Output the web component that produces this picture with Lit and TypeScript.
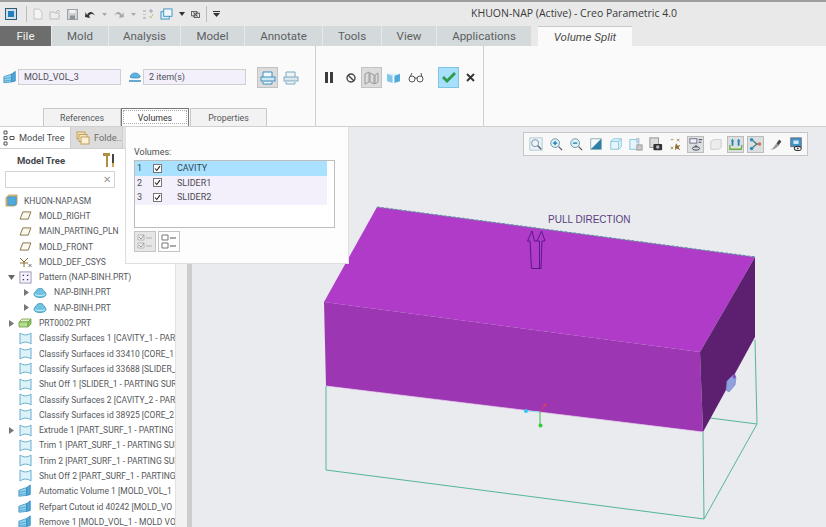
import { LitElement, html, css } from 'lit';
import { customElement } from 'lit/decorators.js';

type Row = { label: string; icon: string; indent: number; arrow?: 'open' | 'closed' };

const ROWS: Row[] = [
  { label: 'KHUON-NAP.ASM', icon: 'asm', indent: 0 },
  { label: 'MOLD_RIGHT', icon: 'plane', indent: 1 },
  { label: 'MAIN_PARTING_PLN', icon: 'plane', indent: 1 },
  { label: 'MOLD_FRONT', icon: 'plane', indent: 1 },
  { label: 'MOLD_DEF_CSYS', icon: 'csys', indent: 1 },
  { label: 'Pattern (NAP-BINH.PRT)', icon: 'pattern', indent: 1, arrow: 'open' },
  { label: 'NAP-BINH.PRT', icon: 'part', indent: 2, arrow: 'closed' },
  { label: 'NAP-BINH.PRT', icon: 'part', indent: 2, arrow: 'closed' },
  { label: 'PRT0002.PRT', icon: 'block', indent: 1, arrow: 'closed' },
  { label: 'Classify Surfaces 1 [CAVITY_1 - PART', icon: 'surf', indent: 1 },
  { label: 'Classify Surfaces id 33410 [CORE_1', icon: 'surf', indent: 1 },
  { label: 'Classify Surfaces id 33688 [SLIDER_1', icon: 'surf', indent: 1 },
  { label: 'Shut Off 1 [SLIDER_1 - PARTING SUR', icon: 'surf', indent: 1 },
  { label: 'Classify Surfaces 2 [CAVITY_2 - PART', icon: 'surf', indent: 1 },
  { label: 'Classify Surfaces id 38925 [CORE_2', icon: 'surf', indent: 1 },
  { label: 'Extrude 1 [PART_SURF_1 - PARTING', icon: 'surf', indent: 1, arrow: 'closed' },
  { label: 'Trim 1 [PART_SURF_1 - PARTING SUR', icon: 'surf', indent: 1 },
  { label: 'Trim 2 [PART_SURF_1 - PARTING SUR', icon: 'surf', indent: 1 },
  { label: 'Shut Off 2 [PART_SURF_1 - PARTING', icon: 'surf', indent: 1 },
  { label: 'Automatic Volume 1 [MOLD_VOL_1', icon: 'vol', indent: 1 },
  { label: 'Refpart Cutout id 40242 [MOLD_VO', icon: 'vol', indent: 1 },
  { label: 'Remove 1 [MOLD_VOL_1 - MOLD VO', icon: 'vol', indent: 1 },
];

const TABS = [
  { label: 'File', w: 52, cls: 'file' },
  { label: 'Mold', w: 57, cls: '' },
  { label: 'Analysis', w: 72, cls: '' },
  { label: 'Model', w: 64, cls: '' },
  { label: 'Annotate', w: 78, cls: '' },
  { label: 'Tools', w: 59, cls: '' },
  { label: 'View', w: 55, cls: '' },
  { label: 'Applications', w: 95, cls: '' },
];

const volIcon = (s = 16) => html`<svg width=${s} height=${s} viewBox="0 0 16 16">
  <path d="M1 7l9-3v9l-9 1z" fill="#8fd0ec" stroke="#3f93c4" stroke-width=".9" />
  <path d="M10 4l4-3v11l-4 1z" fill="#4fa9dc" stroke="#2f84b8" stroke-width=".9" />
  <path d="M1 9.500l9-1.500M1 12l9-1" stroke="#3f93c4" stroke-width=".7" />
</svg>`;

const partIcon = () => html`<svg width="14" height="11" viewBox="0 0 14 11">
  <path d="M1 7.500c0-2 2-3 3-5 2-1.500 5-1.500 6 0 1 2 3 3 3 5 0 2-3 3-6 3s-6-1-6-3z" fill="#6fc3e0" stroke="#3a90b5" stroke-width=".8" />
  <path d="M2 7.500c2 1.500 8 1.500 10 0" fill="none" stroke="#dff3fb" stroke-width=".8" />
</svg>`;

const treeIcon = (kind: string) => {
  switch (kind) {
    case 'asm':
      return html`<svg width="13" height="13" viewBox="0 0 14 14">
        <path d="M1 4l3-3h9v9l-3 3H1z" fill="#e6c47a" stroke="#b08d45" stroke-width=".7" />
        <rect x="3" y="3" width="9" height="9" fill="#4fa9dc" stroke="#2f84b8" stroke-width=".6" />
      </svg>`;
    case 'plane':
      return html`<svg width="13" height="9" viewBox="0 0 14 10">
        <path d="M4 1h9l-3 8H1z" fill="#fbf8ee" stroke="#7d6b3c" stroke-width="1" />
      </svg>`;
    case 'csys':
      return html`<svg width="14" height="12" viewBox="0 0 14 12">
        <path d="M6 6L2 2M6 6l4-4M6 6v5M2 7h8" stroke="#8a6d2f" stroke-width="1" fill="none" />
        <path d="M10.500 8l3 3m0-3l-3 3" stroke="#444" stroke-width=".7" />
      </svg>`;
    case 'pattern':
      return html`<svg width="13" height="13" viewBox="0 0 14 14">
        <rect x="1" y="1" width="12" height="12" fill="#f5f2fb" stroke="#9a93b8" />
        <path d="M4 4h1.500v1.500H4zM8.500 4H10v1.500H8.500zM4 8.500h1.500V10H4zM8.500 8.500H10V10H8.500z" fill="#3b3470" />
      </svg>`;
    case 'part':
      return partIcon();
    case 'block':
      return html`<svg width="14" height="10" viewBox="0 0 14 10">
        <path d="M1 4l3-3h9l-3 3z" fill="#e2f4c8" stroke="#6f9a4a" stroke-width=".8" />
        <path d="M1 4h9v5H1z" fill="#b3e08a" stroke="#6f9a4a" stroke-width=".8" />
        <path d="M10 4l3-3v5l-3 3z" fill="#8fc560" stroke="#6f9a4a" stroke-width=".8" />
      </svg>`;
    case 'surf':
      return html`<svg width="13" height="13" viewBox="0 0 13 13">
        <path d="M1 1c3.500 2.500 7.500 2.500 11 0v11c-3.500-2.500-7.500-2.500-11 0z" fill="#dcf1fa" stroke="#66aecb" stroke-width="1" />
      </svg>`;
    default:
      return volIcon(14);
  }
};

const checkMark = html`<svg width="9" height="9" viewBox="0 0 9 9">
  <rect x=".5" y=".5" width="8" height="8" fill="#fff" stroke="#777" />
  <path d="M2 4.500l1.800 2L7 2.200" fill="none" stroke="#222" stroke-width="1.100" />
</svg>`;

const qat = [
  html`<svg width="10" height="12" viewBox="0 0 10 12"><path d="M1 1h5l3 3v7H1z" fill="#f4f4f4" stroke="#c4c4c4" /></svg>`,
  html`<svg width="12" height="11" viewBox="0 0 12 11"><path d="M1 3h4l1 1h4v6H1z" fill="#ececec" stroke="#bdbdbd" /><path d="M7 3l2-2 2 2" fill="none" stroke="#bdbdbd" /></svg>`,
  html`<svg width="11" height="11" viewBox="0 0 11 11"><rect x=".5" y=".5" width="10" height="10" fill="#cfd2d6" stroke="#9fa3a8" /><rect x="2.500" y="1" width="6" height="3" fill="#f2f2f2" /><rect x="3" y="6.500" width="5" height="4" fill="#8e9297" /></svg>`,
  html`<svg width="12" height="9" viewBox="0 0 12 9"><path d="M3 5c2-4 6-4 8 1-2-2.500-4-2.500-6-.5l1 2.500L1 7l.5-5z" fill="#333" /></svg>`,
  html`<svg width="5" height="3" viewBox="0 0 5 3"><path d="M0 0h5L2.500 3z" fill="#a8a8a8" /></svg>`,
  html`<svg width="12" height="9" viewBox="0 0 12 9"><path d="M9 5C7 1 3 1 1 6c2-2.500 4-2.500 6-.5L6 8l5-1-.5-5z" fill="#a5a9ad" /></svg>`,
  html`<svg width="5" height="3" viewBox="0 0 5 3"><path d="M0 0h5L2.500 3z" fill="#a8a8a8" /></svg>`,
  html`<svg width="12" height="13" viewBox="0 0 12 13"><path d="M1 2h3v2H1zM1 6h3v1H1zM1 9h3v2H1z" fill="#c4c4c4" /><path d="M7 3h4M9 1v4" stroke="#9aa" /><path d="M7 8l2 2 2-4" stroke="#c9b98a" fill="none" /></svg>`,
  html`<svg width="13" height="12" viewBox="0 0 14 13"><rect x="1" y="4" width="9" height="8" fill="#d6ecf8" stroke="#3f8fc0" /><rect x="4" y="1" width="9" height="8" fill="#eef7fc" stroke="#3f8fc0" /></svg>`,
  html`<svg width="6" height="4" viewBox="0 0 6 4"><path d="M0 0h6L3 4z" fill="#333" /></svg>`,
  html`<svg width="9" height="7" viewBox="0 0 10 8"><rect x=".5" y=".5" width="6" height="5" fill="none" stroke="#555" /><rect x="3.500" y="2.500" width="6" height="5" fill="none" stroke="#555" /><path d="M2 1l6 6M8 1L2 7" stroke="#555" stroke-width=".7" /></svg>`,
];

const viewIcons = [
  html`<svg viewBox="0 0 16 16"><rect x="1" y="1" width="14" height="14" fill="#eaf4f8" stroke="#a8c4d0" /><circle cx="7" cy="7" r="4" fill="none" stroke="#789" /><path d="M10 10l4 4" stroke="#556" stroke-width="1.500" /></svg>`,
  html`<svg viewBox="0 0 16 16"><circle cx="7" cy="7" r="5" fill="#dff1f7" stroke="#5f8e9e" /><path d="M4.500 7h5M7 4.500v5" stroke="#1d7fb0" stroke-width="1.500" /><path d="M11 11l4 4" stroke="#556" stroke-width="1.500" /></svg>`,
  html`<svg viewBox="0 0 16 16"><circle cx="7" cy="7" r="5" fill="#dff1f7" stroke="#5f8e9e" /><path d="M4.500 7h5" stroke="#1d7fb0" stroke-width="1.500" /><path d="M11 11l4 4" stroke="#556" stroke-width="1.500" /></svg>`,
  html`<svg viewBox="0 0 16 16"><rect x="2" y="2" width="12" height="12" fill="#f4f8fa" stroke="#8aa" /><path d="M2 14L14 2v12z" fill="#2b7fa8" /></svg>`,
  html`<svg viewBox="0 0 16 16"><path d="M2 5l3-3h9v9l-3 3H2z" fill="#e6f5fb" stroke="#7cc0dc" /><path d="M11 5v9M11 5l3-3M2 5h9" stroke="#7cc0dc" fill="none" /></svg>`,
  html`<svg viewBox="0 0 16 16"><rect x="1" y="3" width="10" height="11" fill="#e6f5fb" stroke="#7cc0dc" /><rect x="8" y="1" width="4" height="6" fill="#bcd" /><rect x="9" y="9" width="6" height="6" fill="#c8c8c8" stroke="#999" /></svg>`,
  html`<svg viewBox="0 0 16 16"><rect x="1" y="1" width="10" height="11" fill="#dcdcdc" stroke="#8a8a8a" /><rect x="5" y="8" width="10" height="7" rx="1" fill="#333" /><circle cx="10" cy="11.500" r="2" fill="#bbb" /></svg>`,
  html`<svg viewBox="0 0 16 16"><path d="M2 3h3M9 2l3 3M12 2L9 5M2 14l3-3M5 14l-3-3" stroke="#a08a50" stroke-width="1" /><path d="M8 7l2 3 3-1-2 3 2 3-4-2-2 2v-4z" fill="#8a6d2f" /></svg>`,
  html`<svg viewBox="0 0 16 16"><rect x="1" y="2" width="8" height="5" fill="#eef" stroke="#667" /><path d="M11 3h4M11 6h3" stroke="#334" /><path d="M8 9v3" stroke="#334" /><ellipse cx="8" cy="13" rx="4" ry="2" fill="none" stroke="#334" /></svg>`,
  html`<svg viewBox="0 0 16 16"><path d="M2 5l3-2h9v9l-3 2H2z" fill="#ececec" stroke="#c8c8c8" /></svg>`,
  html`<svg viewBox="0 0 16 16"><path d="M4 2l2 3H2zM11 2l2 3H9z" fill="#1d7fb0" /><path d="M3 5h2v5H3zM10 5h2v5h-2z" fill="#1d7fb0" /><path d="M1 9v5h13l1-5" fill="none" stroke="#6fae3a" stroke-width="1.500" /></svg>`,
  html`<svg viewBox="0 0 16 16"><path d="M3 3l6 5-6 5" fill="none" stroke="#3a6d78" stroke-width="1.300" /><path d="M9 8h4" stroke="#3a6d78" /><circle cx="3" cy="3" r="2" fill="#2f8ec0" /><circle cx="3" cy="13" r="2" fill="#2f8ec0" /><circle cx="12" cy="8" r="2" fill="#d0705a" /></svg>`,
  html`<svg viewBox="0 0 16 16"><path d="M1 14c4 0 4-3 7-6l3-5 3 2-3 5c-3 3-6 5-10 4z" fill="#9b9b9b" /><path d="M9 7l3-4 2 2-3 4z" fill="#444" /></svg>`,
  html`<svg viewBox="0 0 16 16"><rect x="2" y="1" width="12" height="10" fill="#3f94c8" stroke="#667" /><rect x="5" y="4" width="6" height="4" fill="#cfe8f5" /><ellipse cx="10" cy="13" rx="4" ry="2.500" fill="none" stroke="#333" stroke-width="1.200" /><circle cx="10" cy="13" r="1" fill="#333" /></svg>`,
];

@customElement('app-root')
export class AppRoot extends LitElement {
  static styles = css`
    :host {
      display: block;
      position: relative;
      width: 826px;
      height: 527px;
      overflow: hidden;
      background: #e9ebee;
      font-family: Roboto, 'Open Sans', sans-serif;
      color: #444;
    }

    .frame {
      display: flex;
      flex-direction: column;
      height: 100%;
    }

    .titlebar {
      display: flex;
      align-items: center;
      height: 26px;
      flex: none;
      box-sizing: border-box;
      border-top: 2px solid #9d9d9d;
      background: #e9e9e9;
    }
    .logo {
      display: flex;
      width: 12px;
      height: 12px;
      margin: 0 5px 0 5px;
      border: 1px solid #335c78;
      background: #cfe0ea;
      padding: 2px;
      box-sizing: border-box;
    }
    .logo i {
      flex: 1;
      background: #1f7fc0;
    }
    .sep {
      width: 1px;
      height: 16px;
      background: #bdbdbd;
    }
    .sep.first {
      margin-left: 4px;
    }
    .sep.last {
      margin-left: 6px;
    }
    .qat {
      display: flex;
      align-items: center;
      gap: 6px;
      margin-left: 6px;
    }
    .caret {
      margin-left: 6px;
    }
    .title {
      position: absolute;
      left: 471px;
      top: 6px;
      font-family: 'Open Sans', sans-serif;
      font-size: 10.5px;
      line-height: 14px;
      color: #3a3a3a;
      white-space: nowrap;
    }

    .tabs {
      display: flex;
      height: 20px;
      flex: none;
      background: #e9e9e9;
    }
    .tab {
      display: flex;
      align-items: center;
      justify-content: center;
      margin-right: 1px;
      background: #d4d9db;
      font-size: 11.5px;
      color: #5c5f62;
      box-sizing: border-box;
    }
    .tab.file {
      background: #6d6d6d;
      color: #f2f2f2;
    }
    .tab.active {
      width: 94px;
      margin-left: 6px;
      background: #fafafa;
      border-top: 1px solid #c9c9c9;
      font-style: italic;
      color: #4b4b4b;
    }

    .ribbon {
      position: relative;
      display: flex;
      flex: none;
      height: 81px;
      background: #fafafa;
      border-bottom: 1px solid #d0d0d0;
      box-sizing: border-box;
    }
    .group {
      display: flex;
      align-items: flex-start;
      padding-top: 23px;
      box-sizing: border-box;
      border-right: 1px solid #cfcfcf;
    }
    .group.main {
      width: 316px;
      padding-left: 3px;
    }
    .group.actions {
      width: 168px;
      padding-left: 5px;
    }
    .field {
      width: 103px;
      height: 16px;
      margin-left: 1px;
      padding-left: 5px;
      box-sizing: border-box;
      background: #f4f0fb;
      border: 1px solid #cfcfcf;
      font-size: 9px;
      line-height: 14px;
      color: #4c4f55;
    }
    .ficon {
      display: flex;
      align-items: center;
      width: 14px;
      height: 16px;
    }
    .gap {
      width: 7px;
    }
    .spacer {
      width: 10px;
    }
    .rbtn {
      display: flex;
      align-items: center;
      justify-content: center;
      width: 21px;
      height: 21px;
      margin-top: -2px;
      margin-left: 1px;
      box-sizing: border-box;
    }
    .rbtn.on {
      background: #dcdcdc;
      border: 1px solid #c2c2c2;
    }
    .rbtn.ok {
      background: #a6e0fb;
      border: 1px solid #7fc4e4;
      margin-left: 12px;
    }
    .rbtn.pause {
      width: 15px;
      margin-left: 0;
    }
    .rbtn.ban {
      width: 16px;
      margin-left: 7px;
    }
    .rbtn.tight {
      margin-left: 2px;
    }

    .subtabs {
      position: absolute;
      left: 43px;
      bottom: 0;
      display: flex;
    }
    .subtab {
      display: flex;
      align-items: center;
      justify-content: center;
      height: 18px;
      box-sizing: border-box;
      background: #f2f2f2;
      border: 1px solid #c9c9c9;
      border-bottom: 0;
      font-size: 8.8px;
      color: #55585c;
    }
    .subtab.refs {
      width: 78px;
    }
    .subtab.vols {
      width: 68px;
    }
    .subtab.props {
      width: 77px;
      margin-left: 1px;
    }
    .subtab.sel {
      background: #fff;
      color: #333;
      border-color: #777;
      outline: 1px dotted #aaa;
      outline-offset: -3px;
    }

    .body {
      display: flex;
      flex: 1;
      min-height: 0;
    }
    .side {
      display: flex;
      flex: none;
      width: 192px;
    }
    .tree {
      width: 175px;
      flex: none;
      background: #fff;
      overflow: hidden;
    }
    .rail {
      width: 12px;
      flex: none;
      background: #f2f2f2;
      border-left: 1px solid #e2e2e2;
      box-sizing: border-box;
    }
    .rail2 {
      width: 5px;
      flex: none;
      background: #cdcdcd;
    }
    .ptabs {
      display: flex;
      height: 22px;
      background: #e4e4e4;
      border-bottom: 1px solid #cfcfcf;
      box-sizing: border-box;
    }
    .ptab {
      display: flex;
      align-items: center;
      gap: 4px;
      padding-left: 3px;
      width: 71px;
      box-sizing: border-box;
      background: #fff;
      border-right: 1px solid #cfcfcf;
      font-size: 9.2px;
      color: #4a4d50;
      white-space: nowrap;
    }
    .ptab.off {
      width: 52px;
      padding-left: 5px;
      background: #dcdcdc;
      color: #6b6b6b;
    }
    .thead {
      display: flex;
      align-items: center;
      justify-content: space-between;
      height: 22px;
      padding: 0 59px 0 17px;
      font-size: 9.5px;
      font-weight: 700;
      color: #45484b;
    }
    .search {
      position: relative;
      width: 110px;
      height: 17px;
      margin-left: 5px;
      box-sizing: border-box;
      border: 1px solid #d4d4d4;
      background: #fff;
    }
    .search span {
      position: absolute;
      right: 3px;
      top: 0;
      font-size: 10px;
      line-height: 15px;
      color: #9a9a9a;
    }
    .rows {
      margin-top: 5px;
    }
    .row {
      display: flex;
      align-items: center;
      height: 15.3px;
      white-space: nowrap;
      font-size: 8.5px;
      color: #55585c;
    }
    .row.l0 {
      padding-left: 3px;
    }
    .row.l1 {
      padding-left: 4px;
    }
    .row.l2 {
      padding-left: 19px;
    }
    .arrow {
      display: flex;
      justify-content: center;
      flex: none;
      width: 8px;
      margin: 0 2px 0 3px;
    }
    .ticon {
      display: flex;
      justify-content: center;
      flex: none;
      width: 16px;
      margin-right: 6px;
    }
    .row.l0 .ticon {
      margin-right: 5px;
    }

    .canvas {
      position: relative;
      flex: 1;
    }
    .scene {
      position: absolute;
      left: 0;
      top: 0;
      width: 634px;
      height: 400px;
    }
    .pull {
      font-family: 'Liberation Sans', sans-serif;
      font-size: 10px;
      fill: #5a3f80;
    }
    .viewbar {
      position: absolute;
      left: 331px;
      top: 5px;
      display: flex;
      align-items: center;
      gap: 3px;
      height: 24px;
      padding: 0 3px;
      box-sizing: border-box;
      background: #f8f8f8;
      border: 1px solid #c6c6c6;
    }
    .vbtn {
      display: flex;
      align-items: center;
      justify-content: center;
      width: 17px;
      height: 17px;
      box-sizing: border-box;
    }
    .vbtn svg {
      width: 14px;
      height: 14px;
    }
    .vbtn.on {
      background: #dcdfe0;
      border: 1px solid #bcbcbc;
    }

    .popup {
      position: absolute;
      left: 125px;
      top: 127px;
      width: 224px;
      height: 137px;
      padding: 19px 13px 0 8px;
      box-sizing: border-box;
      background: #fdfdfd;
      border: 1px solid #dedede;
      border-top: 0;
    }
    .popup label {
      display: block;
      font-size: 9px;
      line-height: 13px;
      color: #4a4d50;
    }
    .list {
      width: 201px;
      height: 68px;
      margin-top: 1px;
      padding-right: 7px;
      box-sizing: border-box;
      background: #fff;
      border: 1px solid #bdbdbd;
    }
    .lrow {
      display: flex;
      align-items: center;
      height: 14.6px;
      background: #f3f0fc;
      font-size: 9px;
      color: #4a4d50;
    }
    .lrow.sel {
      background: #a9e1ff;
      color: #2f4858;
    }
    .lrow b {
      width: 18px;
      padding-left: 2px;
      box-sizing: border-box;
      font-weight: 400;
    }
    .lrow span {
      margin-left: 15px;
    }
    .pbtns {
      display: flex;
      gap: 2px;
      margin-top: 3px;
    }
    .pbtn {
      display: flex;
      align-items: center;
      justify-content: center;
      width: 22px;
      height: 21px;
      box-sizing: border-box;
      border: 1px solid #c4c4c4;
    }
    .pbtn.off {
      background: #e6e6e6;
    }
  `;

  protected render() {
    return html`
      <div class="frame">
        ${this.renderTitle()}
        <div class="tabs">
          ${TABS.map((t) => html`<div class="tab ${t.cls}" style="width:${t.w - 1}px">${t.label}</div>`)}
          <div class="tab active">Volume Split</div>
        </div>
        ${this.renderRibbon()}
        <div class="body">
          ${this.renderSide()}
          <div class="canvas">
            ${this.renderScene()}
            <div class="viewbar">
              ${viewIcons.map(
                (icon, i) => html`<div class="vbtn ${[8, 10, 11].includes(i) ? 'on' : ''}">${icon}</div>`
              )}
            </div>
          </div>
        </div>
      </div>
      ${this.renderPopup()}
    `;
  }

  private renderTitle() {
    return html`
      <div class="titlebar">
        <div class="logo"><i></i></div>
        <div class="sep first"></div>
        <div class="qat">${qat}</div>
        <div class="sep last"></div>
        <svg class="caret" width="7" height="6" viewBox="0 0 7 6"><path d="M0 0h7v1H0zM0 2h7L3.500 6z" fill="#333" /></svg>
      </div>
      <div class="title">KHUON-NAP (Active) - Creo Parametric 4.0</div>
    `;
  }

  private renderRibbon() {
    return html`
      <div class="ribbon">
        <div class="group main">
          <div class="ficon">${volIcon(15)}</div>
          <div class="field">MOLD_VOL_3</div>
          <div class="gap"></div>
          <div class="ficon">
            <svg width="14" height="12" viewBox="0 0 14 12">
              <path d="M2 6c1-3 3-4 5-4s4 1 5 3-2 2-5 2-4 0-5-1z" fill="#5db4e0" stroke="#2f84b8" stroke-width=".7" />
              <path d="M1 10h12" stroke="#2f84b8" stroke-width="1.400" />
            </svg>
          </div>
          <div class="field">2 item(s)</div>
          <div class="spacer"></div>
          <div class="rbtn on">
            <svg width="16" height="16" viewBox="0 0 16 16">
              <path d="M3 7V2h9v5M3 12v2h9v-2" fill="#eef7fc" stroke="#3f8fc0" />
              <rect x="1" y="7" width="14" height="4" fill="#cfe8f5" stroke="#3f8fc0" />
            </svg>
          </div>
          <div class="rbtn tight">
            <svg width="16" height="16" viewBox="0 0 16 16">
              <path d="M3 7V2h9v5M3 12v2h9v-2" fill="#eef3f6" stroke="#7fa9c2" />
              <rect x="1" y="7" width="14" height="4" fill="#d8e6ee" stroke="#7fa9c2" />
            </svg>
          </div>
          <div class="subtabs">
            <div class="subtab refs">References</div>
            <div class="subtab vols sel">Volumes</div>
            <div class="subtab props">Properties</div>
          </div>
        </div>
        <div class="group actions">
          <div class="rbtn pause">
            <svg width="10" height="11" viewBox="0 0 10 11"><path d="M1 0h3v11H1zM6 0h3v11H6z" fill="#3c3c3c" /></svg>
          </div>
          <div class="rbtn ban">
            <svg width="10" height="10" viewBox="0 0 10 10"><circle cx="5" cy="5" r="4" fill="none" stroke="#444" stroke-width="1.400" /><path d="M2 2l6 6" stroke="#444" stroke-width="1.400" /></svg>
          </div>
          <div class="rbtn on tight">
            <svg width="15" height="14" viewBox="0 0 15 14"><path d="M1 3l4-2v10l-4 2zM6 2l4 2v9l-4-2zM11 4l3-2v9l-3 2z" fill="none" stroke="#9a9a9a" /></svg>
          </div>
          <div class="rbtn">
            <svg width="15" height="12" viewBox="0 0 16 13"><path d="M1 2l6 2v8l-6-2z" fill="#7cc8ea" /><path d="M9 4l6-2v8l-6 2z" fill="#4fa9dc" /><path d="M1 2l6-1 1 1 7 0-7 2z" fill="#d8f0fa" /></svg>
          </div>
          <div class="rbtn">
            <svg width="16" height="11" viewBox="0 0 16 11"><circle cx="4" cy="7" r="3" fill="none" stroke="#555" /><circle cx="12" cy="7" r="3" fill="none" stroke="#555" /><path d="M7 6h2M2 5l2-4M14 5l-1-4" stroke="#555" fill="none" /></svg>
          </div>
          <div class="rbtn ok">
            <svg width="16" height="13" viewBox="0 0 16 13"><path d="M1 7l2-2 3 3 7-7 2 2-9 9z" fill="#2f9a4a" /></svg>
          </div>
          <div class="rbtn">
            <svg width="9" height="9" viewBox="0 0 9 9"><path d="M1 1l7 7M8 1L1 8" stroke="#333" stroke-width="1.800" /></svg>
          </div>
        </div>
      </div>
    `;
  }

  private renderSide() {
    return html`
      <div class="side">
        <div class="tree">
          <div class="ptabs">
            <div class="ptab">
              <svg width="12" height="16" viewBox="0 0 12 16">
                <path d="M1 1h3v3H1zM1 6.500h3v3H1zM1 12h3v3H1zM7 6.500h4v3H7z" fill="none" stroke="#555" />
              </svg>
              Model Tree
            </div>
            <div class="ptab off">
              <svg width="14" height="14" viewBox="0 0 14 14">
                <rect x="1" y="1" width="8" height="7" fill="#f4e2b0" stroke="#c0a060" />
                <rect x="3" y="3.500" width="8" height="7" fill="#f7e8c0" stroke="#c0a060" />
                <rect x="5" y="6" width="8" height="7" fill="#fbf0d4" stroke="#c0a060" />
              </svg>
              Folde..
            </div>
          </div>
          <div class="thead">
            Model Tree
            <svg width="14" height="16" viewBox="0 0 14 16">
              <path d="M1 1h7v3H6v11H4V4H1z" fill="#b08d45" />
              <path d="M10 2h2v9h-2z" fill="#444" />
              <path d="M10 11h2v4h-2z" fill="#d0a850" />
            </svg>
          </div>
          <div class="search"><span>✕</span></div>
          <div class="rows">
            ${ROWS.map(
              (r) => html`
                <div class="row l${r.indent}">
                  ${r.indent > 0
                    ? html`<div class="arrow">
                        ${r.arrow === 'open'
                          ? html`<svg width="7" height="5" viewBox="0 0 7 5"><path d="M0 0h7L3.500 5z" fill="#666" /></svg>`
                          : r.arrow === 'closed'
                            ? html`<svg width="5" height="7" viewBox="0 0 5 7"><path d="M0 0l5 3.500L0 7z" fill="#777" /></svg>`
                            : ''}
                      </div>`
                    : ''}
                  <div class="ticon">${treeIcon(r.icon)}</div>
                  ${r.label}
                </div>
              `
            )}
          </div>
        </div>
        <div class="rail"></div>
        <div class="rail2"></div>
      </div>
    `;
  }

  private renderScene() {
    // scene coordinates are page coordinates, viewBox starts at the canvas corner
    return html`
      <svg class="scene" viewBox="192 127 634 400">
        <g fill="none" stroke="#55b597" stroke-width="1">
          <path d="M326 386V470L704 519 757 424 755 340M703 432L704 519M710 418L757 424" />
        </g>
        <path d="M377 207L755 257 700 352 324 302z" fill="#af3bc8" />
        <path d="M324 302L700 352 703 432 326 386z" fill="#9c36b2" />
        <path d="M755 257L755 337 703 432 700 352z" fill="#5d2071" />
        <path d="M377 207L755 257" fill="none" stroke="#5f8fa0" stroke-width="1.200" stroke-dasharray="3 1.500" />
        <path d="M326 386L703 432" fill="none" stroke="#e9d3ee" stroke-width=".7" />
        <path
          d="M532 231L527.500 241H530L531.500 268.500H541L542 241H545L541.500 231 537 241H539.500L539.500 268M537 241L534.500 241 532 231"
          fill="none"
          stroke="#5a1a85"
          stroke-width="1"
        />
        <text class="pull" x="548" y="223">PULL DIRECTION</text>
        <path d="M727 381L733 375 736 377 735 385 729 392 726 390z" fill="#8fa0dc" stroke="#6b7fc4" stroke-width=".6" />
        <path d="M732 376l3-2 1 3-2 2z" fill="#8a4fc0" />
        <path d="M526 411L540 412" stroke="#8fe4f7" stroke-width="1" />
        <circle cx="526" cy="411" r="2" fill="#35c6ef" />
        <path d="M540 412V425" stroke="#3fb84a" stroke-width="1" />
        <circle cx="540.500" cy="425.500" r="2" fill="#35cc3a" />
        <path d="M540 412L545 405" stroke="#d8405a" stroke-width="1" />
        <circle cx="545" cy="405" r="1.500" fill="#d8405a" />
      </svg>
    `;
  }

  private renderPopup() {
    return html`
      <div class="popup">
        <label>Volumes:</label>
        <div class="list">
          ${['CAVITY', 'SLIDER1', 'SLIDER2'].map(
            (name, i) => html`
              <div class="lrow ${i === 0 ? 'sel' : ''}"><b>${i + 1}</b>${checkMark}<span>${name}</span></div>
            `
          )}
        </div>
        <div class="pbtns">
          <div class="pbtn off">
            <svg width="16" height="15" viewBox="0 0 16 15">
              <path d="M1 1h6v5H1zM1 9h6v5H1z" fill="#f2f2f2" stroke="#b8b8b8" />
              <path d="M2 3l2 2 3-4M2 11l2 2 3-4" fill="none" stroke="#9a9a9a" />
              <path d="M9 4h6M9 12h6" stroke="#b0b0b0" />
            </svg>
          </div>
          <div class="pbtn">
            <svg width="16" height="15" viewBox="0 0 16 15">
              <path d="M1 1h6v5H1zM1 9h6v5H1z" fill="#fff" stroke="#777" />
              <path d="M9 4h6M9 12h6" stroke="#555" />
            </svg>
          </div>
        </div>
      </div>
    `;
  }
}

declare global {
  interface HTMLElementTagNameMap {
    'app-root': AppRoot;
  }
}
